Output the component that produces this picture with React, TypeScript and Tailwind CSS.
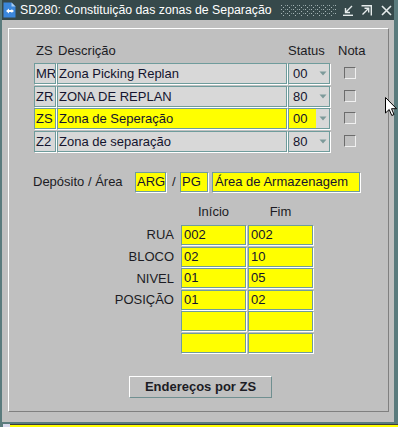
import React from "react";

const rows = [
  { code: "MR", desc: "Zona Picking Replan", status: "00", active: false },
  { code: "ZR", desc: "ZONA DE REPLAN", status: "80", active: false },
  { code: "ZS", desc: "Zona de Seperação", status: "00", active: true },
  { code: "Z2", desc: "Zona de separação", status: "80", active: false },
];

const locations = [
  { label: "RUA", from: "002", to: "002" },
  { label: "BLOCO", from: "02", to: "10" },
  { label: "NIVEL", from: "01", to: "05" },
  { label: "POSIÇÃO", from: "01", to: "02" },
  { label: "", from: "", to: "" },
  { label: "", from: "", to: "" },
];

const box =
  "box-border overflow-hidden whitespace-nowrap border border-[#6f9c9c] shadow-[1px_1px_0_#ffffff] text-[13px] text-[#14142e]";

function Field({
  value,
  yellow,
  className,
}: {
  value: string;
  yellow?: boolean;
  className: string;
}) {
  return (
    <div
      className={`${box} ${yellow ? "bg-[#ffff00]" : "bg-[#d8d8d8]"} ${className}`}
    >
      {value}
    </div>
  );
}

function DocIcon() {
  return (
    <svg width="13" height="16" viewBox="0 0 13 16" className="shrink-0">
      <path d="M0.5 0.5H8.5L12.5 4.5V15.5H0.5Z" fill="#3b87dc" />
      <path d="M8.5 0.5V4.5H12.5Z" fill="#a9cdf2" />
      <path d="M3 9L6 6.5V11.5Z" fill="#ffffff" />
      <rect x="6" y="8" width="3" height="2" fill="#ffffff" />
      <path d="M11 9L8.5 7V11Z" fill="#ffffff" />
    </svg>
  );
}

function Dots() {
  return (
    <svg width="56" height="11" className="shrink-0">
      <defs>
        <pattern id="grip" width="6" height="4" patternUnits="userSpaceOnUse">
          <rect x="0" y="0" width="1" height="1" fill="#a7b5b6" />
          <rect x="2" y="2" width="1" height="1" fill="#a7b5b6" />
          <rect x="4" y="0" width="1" height="1" fill="#7f9193" />
        </pattern>
      </defs>
      <rect width="56" height="11" fill="url(#grip)" />
    </svg>
  );
}

function TitleButtons() {
  return (
    <div className="flex items-center gap-[5px] text-[#e6ecec]">
      <svg width="11" height="11" viewBox="0 0 11 11">
        <path d="M9 1L3 7M2.5 3V7.5H7" stroke="currentColor" strokeWidth="1.4" fill="none" />
        <path d="M0 10.3H10" stroke="currentColor" strokeWidth="1.4" />
      </svg>
      <svg width="11" height="11" viewBox="0 0 11 11" className="ml-[2px]">
        <path d="M0.5 0.7H10.3V10.5" stroke="currentColor" strokeWidth="1.4" fill="none" />
        <path d="M1.5 9.5L7.5 3.5M3.5 3.3H7.7V7.5" stroke="currentColor" strokeWidth="1.4" fill="none" />
      </svg>
      <svg width="11" height="11" viewBox="0 0 11 11" className="ml-[4px]">
        <path d="M1 1L10 10M10 1L1 10" stroke="currentColor" strokeWidth="1.6" />
      </svg>
    </div>
  );
}

function Checkbox() {
  return (
    <div className="box-border h-[12px] w-[12px] border-t border-l border-t-[#6c6c6c] border-l-[#6c6c6c] border-r border-b border-r-[#f0f0f0] border-b-[#f0f0f0]" />
  );
}

function StatusSelect({ value, yellow }: { value: string; yellow: boolean }) {
  return (
    <div className={`${box} ml-[1px] flex h-[21px] w-[42px] bg-[#d8d8d8]`}>
      <div
        className={`w-[27px] pl-[4px] leading-[19px] ${yellow ? "bg-[#ffff00]" : ""}`}
      >
        {value}
      </div>
      <div className="flex flex-1 items-center justify-center">
        <svg width="8" height="5" viewBox="0 0 8 5">
          <path d="M0.5 0.5H7.5L4 4.5Z" fill="#7d9a9a" />
        </svg>
      </div>
    </div>
  );
}

export default function App() {
  return (
    <div className="relative h-[427px] w-[398px] overflow-hidden bg-[#4e6c6e] font-['Liberation_Sans',Arial,sans-serif]">
      <div className="flex h-[424px] flex-col border-l-2 border-r-4 border-b-2 border-[#5a7b7d]">
        <div className="flex h-[20px] items-center bg-[#36494b] pl-[1px] pr-[1px]">
          <DocIcon />
          <span className="ml-[4px] whitespace-nowrap text-[12.3px] text-white">
            SD280: Constituição das zonas de Separação
          </span>
          <div className="ml-[9px]">
            <Dots />
          </div>
          <div className="ml-auto mr-[1px]">
            <TitleButtons />
          </div>
        </div>

        <div className="flex-1 bg-[#c0c0c0] pt-[8px] pr-[5px] pb-[10px] pl-[6px]">
          <div className="box-border h-full border border-t-white border-l-white border-r-[#808080] border-b-[#808080] pt-[14px] text-[13px] text-[#1c1c24]">
            {/* list header */}
            <div className="flex h-[16px] leading-[16px] pl-[25px]">
              <div className="w-[22px] pl-[2px]">ZS</div>
              <div className="ml-[1px] w-[230px] pl-[1px]">Descrição</div>
              <div className="ml-[1px] w-[42px]">Status</div>
              <div className="ml-[8px]">Nota</div>
            </div>

            <div className="mt-[4px] flex flex-col gap-[1.7px] pl-[25px]">
              {rows.map((r) => (
                <div key={r.code} className="flex h-[21px] items-start">
                  <Field
                    value={r.code}
                    yellow={r.active}
                    className="h-[21px] w-[22px] pl-[1px] leading-[19px]"
                  />
                  <Field
                    value={r.desc}
                    yellow={r.active}
                    className="ml-[1px] h-[21px] w-[230px] pl-[1px] leading-[19px]"
                  />
                  <StatusSelect value={r.status} yellow={r.active} />
                  <div className="ml-[14px] mt-[4px]">
                    <Checkbox />
                  </div>
                </div>
              ))}
            </div>

            {/* deposit / area */}
            <div className="mt-[20px] flex h-[20px] items-center pl-[24px]">
              <span className="w-[102px]">Depósito / Área</span>
              <Field value="ARG" yellow className="h-[20px] w-[31px] pl-[1px] leading-[18px]" />
              <span className="ml-[6px] w-[8px]">/</span>
              <Field value="PG" yellow className="h-[20px] w-[28px] pl-[1px] leading-[18px]" />
              <Field
                value="Área de Armazenagem"
                yellow
                className="ml-[4px] h-[20px] w-[148px] pl-[2px] leading-[18px]"
              />
            </div>

            {/* location range */}
            <div className="mt-[12px] flex h-[16px] leading-[16px] pl-[172px]">
              <div className="w-[65px] text-center">Início</div>
              <div className="ml-[2px] w-[65px] text-center">Fim</div>
            </div>

            <div className="mt-[5px] flex flex-col gap-[1.6px]">
              {locations.map((l, i) => (
                <div key={i} className="flex h-[20px] items-center">
                  <div className="w-[165px] text-right">{l.label}</div>
                  <Field value={l.from} yellow className="ml-[7px] h-[20px] w-[65px] pl-[2px] leading-[18px]" />
                  <Field value={l.to} yellow className="ml-[2px] h-[20px] w-[65px] pl-[2px] leading-[18px]" />
                </div>
              ))}
            </div>

            <div className="mt-[23px] pl-[120px]">
              <button className="box-border h-[22px] w-[143px] border border-t-white border-l-white border-r-[#6f8f90] border-b-[#6f8f90] bg-[#c0c0c0] text-[13px] font-bold leading-[20px] text-[#1c1c24]">
                Endereços por ZS
              </button>
            </div>
          </div>
        </div>
      </div>

      {/* strip of the window underneath */}
      <div className="flex h-[3px]">
        <div className="w-[3px] bg-[#5a7b7d]" />
        <div className="w-[7px] bg-[#d8d8ec]" />
        <div className="flex-1 border-t border-[#3c3c3c] bg-[#ffff00]" />
      </div>

      {/* mouse pointer */}
      <svg
        width="13"
        height="20"
        viewBox="0 0 13 20"
        className="absolute left-[385px] top-[97px]"
      >
        <path
          d="M0.5 0.5V16L4.2 12.5L6.8 18.5L9 17.5L6.5 11.7H11.5Z"
          fill="#ffffff"
          stroke="#000000"
          strokeWidth="1"
          strokeLinejoin="round"
        />
      </svg>
    </div>
  );
}
